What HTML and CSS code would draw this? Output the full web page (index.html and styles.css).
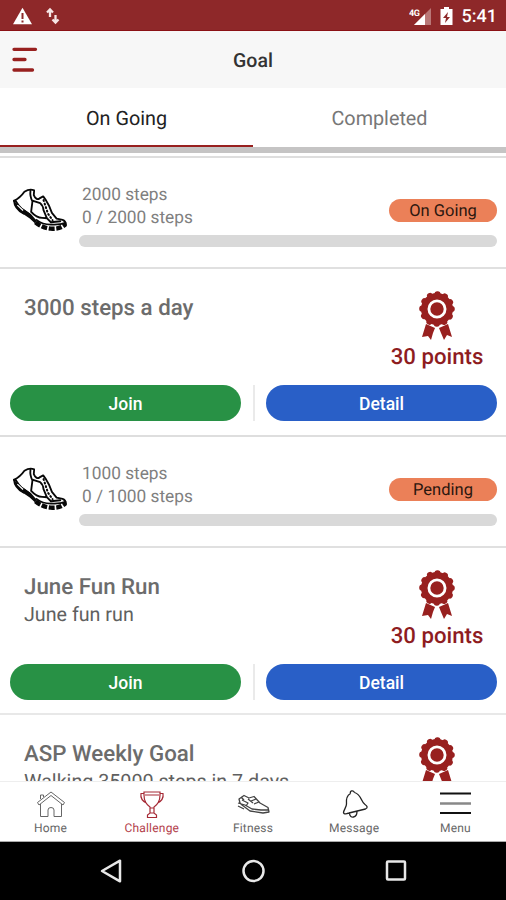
FILE: index.html
```html
<!DOCTYPE html>
<html lang="en">
<head>
<meta charset="utf-8">
<title>Goal</title>
<link rel="stylesheet" href="styles.css">
</head>
<body>
<svg class="defs" aria-hidden="true">
  <symbol id="shoe" viewBox="10 24 164 134">
    <g fill="none" stroke="#080808" stroke-width="5.5" stroke-linejoin="round" stroke-linecap="round">
      <path d="M13 62C26 56 37 45 44 35C52 30 62 26 73 31L72 45C76 55 83 60 89 55L100 49L108 60L117 76L126 98L140 115L158 119Q167 122 168 133"/>
      <path d="M13 62C14 78 26 92 41 100M17 61Q26 76 36 86L60 103M62 32Q60 50 68 64L64 95M70 62L91 69Q100 77 101 90L111 114L123 126L151 123M65 96Q80 113 97 113L111 114M80 119Q99 134 126 133Q151 134 166 128"/>
      <path d="M101 60L114 100L128 120" stroke-width="6" stroke-dasharray="3 8"/>
    </g>
    <path d="M14 64L38 84L64 102L80 121L76 130L60 115L38 100Q18 86 14 64Z" fill="#080808"/>
    <path d="M23 75L40 91" stroke="#fff" stroke-width="4"/>
    <path d="M77 126Q99 144 123 145Q150 148 167 132" fill="none" stroke="#080808" stroke-width="13" stroke-dasharray="17 5"/>
  </symbol>
  <symbol id="badge" viewBox="0 0 36 50">
    <g fill="#98201f">
      <path d="M7 33L16 37L14 42L12 49L9 45L3 46ZM29 33L20 37L22 42L25 49L28 44L33 46Z"/>
      <circle cx="18" cy="18" r="16"/>
      <circle cx="18" cy="18" r="14.800" fill="none" stroke="#98201f" stroke-width="6" stroke-linecap="round" stroke-dasharray="0.1 7.649"/>
    </g>
    <circle cx="18" cy="18" r="8.100" fill="#98201f" stroke="#fff" stroke-width="2.800"/>
  </symbol>
</svg>
<div class="phone">
  <div class="status">
    <svg class="warn" viewBox="0 0 20 18"><path d="M10 .7L19.5 17.3H.5Z" fill="#fff"/><path d="M10 6v6M10 13.4v2" stroke="#8d2a2a" stroke-width="2"/></svg>
    <svg class="arrows" viewBox="0 0 14 18"><path d="M4 10V3.500M1 5.500L4 2.500L7 5.500M9.500 8v7M6.500 12.500L9.500 15.500L12.500 12.500" fill="none" stroke="#f6e6e6" stroke-width="2.300"/></svg>
    <span class="grow"></span>
    <svg class="signal" viewBox="0 0 24 20"><path d="M22 2v17H5Z" fill="#b97777"/><path d="M16 8V19H5Z" fill="#fff"/><text x="0" y="9.500" class="net">4G</text></svg>
    <svg class="battery" viewBox="0 0 13 20"><path d="M4 1h5v2h3.500v16H.5V3H4Z" fill="#fff"/><path d="M8 6L3 12h3l-1 5 5-6H7Z" fill="#8d2a2a"/></svg>
    <span class="time">5:41</span>
  </div>
  <header class="header">
    <svg class="burger" viewBox="0 0 26 26"><path d="M2 2.300H23.500M2 12.500H13M2 23H20.500" stroke="#98201f" stroke-width="3.300" stroke-linecap="round"/></svg>
    <h1>Goal</h1>
  </header>
  <div class="tabs"><div class="tab active">On Going</div><div class="tab">Completed</div></div>
  <main class="list">
    <section class="progress">
      <svg class="shoe"><use href="#shoe"/></svg>
      <div class="info">
        <div class="row"><div class="steps"><div>2000 steps</div><div>0 / 2000 steps</div></div><span class="pill">On Going</span></div>
        <div class="bar"></div>
      </div>
    </section>
    <section class="goal">
      <div class="top"><div class="copy"><h2>3000 steps a day</h2></div><div class="reward"><svg class="badge"><use href="#badge"/></svg><span>30 points</span></div></div>
      <div class="actions"><button class="join">Join</button><i></i><button class="detail">Detail</button></div>
    </section>
    <section class="progress">
      <svg class="shoe"><use href="#shoe"/></svg>
      <div class="info">
        <div class="row"><div class="steps"><div>1000 steps</div><div>0 / 1000 steps</div></div><span class="pill">Pending</span></div>
        <div class="bar"></div>
      </div>
    </section>
    <section class="goal">
      <div class="top"><div class="copy"><h2>June Fun Run</h2><p>June fun run</p></div><div class="reward"><svg class="badge"><use href="#badge"/></svg><span>30 points</span></div></div>
      <div class="actions"><button class="join">Join</button><i></i><button class="detail">Detail</button></div>
    </section>
    <section class="goal last">
      <div class="top"><div class="copy"><h2>ASP Weekly Goal</h2><p>Walking 35000 steps in 7 days</p></div><div class="reward"><svg class="badge"><use href="#badge"/></svg></div></div>
    </section>
  </main>
  <nav class="nav">
    <div class="item"><svg viewBox="0 0 34 32"><g fill="none" stroke="#666" stroke-width="1"><path d="M3.500 14.500L17 4L30.500 14.500L29 17L17 7.500L5 17ZM6.500 16V28.500H14V22Q14 19.500 17 19.500T20 22V28.500H27.500V16M6.500 11V7H9.500V9"/></g></svg><span>Home</span></div>
    <div class="item on"><svg viewBox="0 0 34 32"><g fill="none" stroke="#a62a36" stroke-width="1.200"><path d="M9 4H25V7C25 13 22 17 19 19V25H15V19C12 17 9 13 9 7ZM9 5.500H6C5 11 9 14 12 15.500M25 5.500H28C29 11 25 14 22 15.500M12.500 29.500V27L15 25H19L21.500 27V29.500ZM10 7H24M15 20H19"/></g></svg><span>Challenge</span></div>
    <div class="item"><svg viewBox="0 0 34 32"><g fill="none" stroke="#444" stroke-width="1.300" stroke-linejoin="round"><path d="M3 11L8 7.500L13 10L18 8.500L24 15L32 19.500L33 24L27 25L14 23L6 17L4 15ZM2 15L9 17L16 21L25 22L33 22M2 18L8 21M6 12L12 15L10 18M12 11L17 15M15 13L20 11M18 16L23 14M5 9L8 12"/></g></svg><span>Fitness</span></div>
    <div class="item"><svg viewBox="0 0 34 32"><g fill="none" stroke="#222" stroke-width="1.300" stroke-linejoin="round"><path d="M13.500 5.500C9 8 9 12 9.500 16C9.500 19 7 21.500 6.500 24.500C7 27 9 25.500 12 25L28.500 21C31 20 30.500 18 28 16.500C24 14 24.500 6.500 17.500 4.500M13.500 5.500C12.500 3 16 1.500 17.500 4.500M12.500 25.500C13 31 20 30 20 23.500"/></g></svg><span>Message</span></div>
    <div class="item"><svg viewBox="0 0 34 32"><path d="M2 5.500H33M2 25H33" stroke="#111" stroke-width="2"/><path d="M2 15.500H33" stroke="#888" stroke-width="2.500"/></svg><span>Menu</span></div>
  </nav>
  <div class="system">
    <svg viewBox="0 0 24 24"><path d="M21 1.700V22.300L3 12Z"/></svg>
    <svg viewBox="0 0 24 24"><circle cx="11.500" cy="12" r="10"/></svg>
    <svg viewBox="0 0 24 24"><rect x="3" y="2.500" width="18" height="18" rx="1"/></svg>
  </div>
</div>
</body>
</html>
```
FILE: styles.css
```css
* { box-sizing: border-box; }
body { margin: 0; font-family: Roboto, "Liberation Sans", sans-serif; text-rendering: geometricPrecision; }
h1, h2, p { margin: 0; }
.defs { display: none; }
.phone { width: 506px; height: 900px; display: flex; flex-direction: column; overflow: hidden; background: #fff; }
.status { height: 31px; flex: none; display: flex; align-items: center; padding: 1px 9px 0 12px; background: #8e2829; border-bottom: 1px solid #8b1115; color: #fff; }
.grow { flex: 1; }
.warn { width: 21px; height: 18px; }
.arrows { width: 14px; height: 18px; margin-left: 13px; }
.signal { width: 24px; height: 20px; }
.net { font-size: 9px; font-weight: 700; fill: #fff; letter-spacing: -.5px; }
.battery { width: 13px; height: 20px; margin: 0 9px 0 7px; }
.time { font-size: 18px; font-weight: 500; padding-top: 2px; }
.header { height: 57px; flex: none; display: grid; grid-template-columns: 60px 1fr 60px; align-items: center; background: #f7f7f7; }
.burger { width: 26px; height: 26px; margin-left: 12px; }
.header h1 { text-align: center; font-size: 19.500px; font-weight: 500; color: #333; padding-top: 1px; }
.tabs { height: 65px; flex: none; display: flex; border-bottom: 6px solid #c5c4c4; }
.tab { flex: 1; padding-top: 1px; display: flex; align-items: center; justify-content: center; font-size: 19.800px; color: #777; }
.tab.active { color: #222; border-bottom: 2px solid #98201f; padding-top: 3px; }
.list { flex: 1; min-height: 0; overflow: hidden; padding-top: 3px; border-bottom: 1px solid #eee; }
.progress { height: 113px; border-top: 2px solid #dedede; border-bottom: 2px solid #e0e0e0; padding: 25px 9px 0 13px; display: flex; }
.shoe { width: 55px; height: 45px; flex: none; margin-top: 5px; }
.info { flex: 1; margin-left: 11px; }
.row { display: flex; justify-content: space-between; padding-left: 3px; }
.steps { padding-top: 1px; font-size: 17.300px; line-height: 23px; color: #808080; }
.pill { width: 108px; height: 23px; margin-top: 16px; border-radius: 12px; background: #eb8058; color: #2b170f; font-size: 16.500px; line-height: 25px; text-align: center; }
.bar { height: 12px; margin-top: 5px; border-radius: 6px; background: #d9d9d9; }
.goal { height: 165.500px; padding: 0 9px 0 10px; }
.goal.last { border-top: 2px solid #e8e8e8; }
.top { height: 116px; display: flex; justify-content: space-between; }
.copy { padding: 25px 0 0 14px; }
.copy h2 { font-size: 22.300px; line-height: 28px; font-weight: 500; color: #6c6c6c; }
.copy p { font-size: 19.700px; line-height: 28px; color: #606060; }
.reward { width: 120px; padding-top: 22px; display: flex; flex-direction: column; align-items: center; color: #8e1c1f; font-size: 22.200px; line-height: 27px; font-weight: 500; }
.reward span { margin-top: 3px; }
.badge { width: 36px; height: 50px; flex: none; }
.actions { height: 36px; display: grid; grid-template-columns: 231px 25px 231px; }
.actions i { width: 2px; height: 36px; background: #eaeaea; justify-self: center; }
.actions button { border: 0; border-radius: 18px; padding: 2px 0 0; color: #fff; font: 500 17.500px Roboto, sans-serif; }
.join { background: #289145; }
.detail { background: #295fc7; }
.nav { height: 60px; flex: none; display: flex; border-bottom: 1px solid #aaa; }
.item { flex: 1; display: flex; flex-direction: column; align-items: center; padding-top: 6px; font-size: 12px; line-height: 14px; letter-spacing: .2px; color: #666; }
.item svg { width: 34px; height: 32px; }
.item.on { color: #b3404b; }
.item span { padding-top: 1px; }
.system { height: 58px; flex: none; display: flex; justify-content: space-between; align-items: center; padding: 0 98px 0 99px; background: #000; }
.system svg { width: 24px; height: 24px; fill: none; stroke: #e8e8e8; stroke-width: 2.500px; stroke-linejoin: round; }
```
